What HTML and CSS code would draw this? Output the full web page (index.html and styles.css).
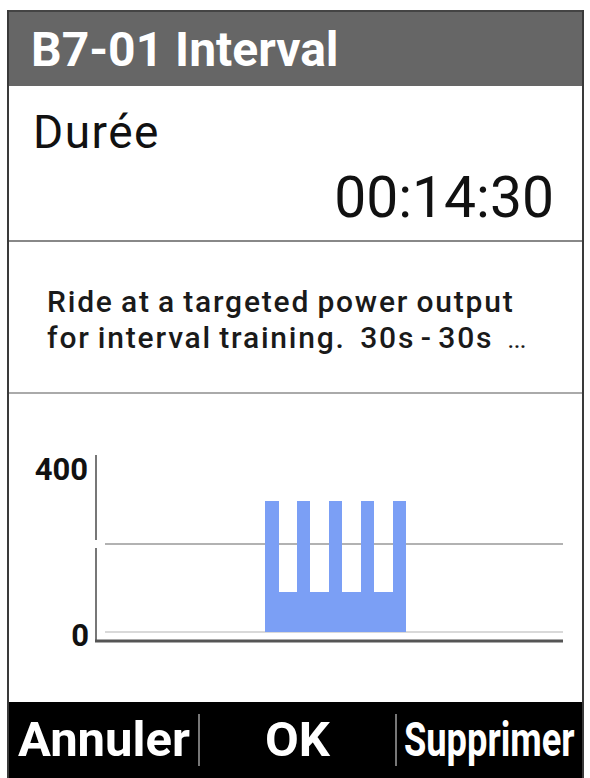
FILE: index.html
```html
<!DOCTYPE html>
<html lang="fr">
<head>
  <meta charset="UTF-8" />
  <meta name="viewport" content="width=device-width, initial-scale=1.0" />
  <title>B7-01 Interval</title>
  <link rel="stylesheet" href="styles.css">
</head>
<body>
  <div class="device">
    <header class="title-bar">
      <h1>B7-01 Interval</h1>
    </header>

    <section class="duration">
      <div class="duration-label">Durée</div>
      <div class="duration-value">00:14:30</div>
    </section>

    <section class="description">
      <p>Ride at a targeted power output<br>for interval training.&nbsp; 30s&thinsp;-&thinsp;30s&nbsp; <span class="more">...</span></p>
    </section>

    <section class="chart">
      <svg class="chart-svg" viewBox="9 394 573 308" width="573" height="308">
        <!-- axes and guides -->
        <line class="axis-y" x1="96" y1="455" x2="96" y2="540" />
        <line class="axis-y" x1="96" y1="548" x2="96" y2="642" />
        <line class="grid" x1="105" y1="544" x2="563" y2="544" />
        <line class="base" x1="105" y1="632" x2="563" y2="632" />
        <line class="axis-x" x1="95" y1="641" x2="563" y2="641" />
        <!-- workout profile -->
        <path class="blocks" d="M265 632 V501 H279 V592 H297 V501 H310 V592 H329 V501 H342 V592 H361 V501 H374 V592 H393 V501 H406 V632 Z" />
        <text class="tick" x="88" y="480">400</text>
        <text class="tick" x="89" y="646">0</text>
      </svg>
    </section>

    <footer class="actions">
      <div class="btn btn-left">Annuler</div>
      <div class="sep"></div>
      <div class="btn btn-mid">OK</div>
      <div class="sep"></div>
      <div class="btn btn-right"><span>Supprimer</span></div>
    </footer>
  </div>
</body>
</html>
```

FILE: styles.css
```css
body {
  margin: 0;
  background-color: #fff;
  font-family: Roboto, "Liberation Sans", sans-serif;
  color: #111;
}
.device {
  margin: 10px 0 0 7px;
  width: 573px;
  height: 768px;
  border-left: 2px solid #3a3a3a;
  border-right: 2px solid #3a3a3a;
  display: flex;
  flex-direction: column;
  overflow: hidden;
}
.title-bar {
  height: 74px;
  background-color: #666;
  border-top: 2px solid #444;
  display: flex;
  align-items: center;
  padding-left: 22px;
}
.title-bar h1 {
  margin: 0;
  font-size: 48px;
  font-weight: bold;
  color: #fff;
}
.duration {
  border-bottom: 2px solid #888;
  padding: 24px 28px 0 24px;
  box-sizing: border-box;
  height: 156px;
}
.duration-label {
  font-size: 46px;
  line-height: 44px;
  letter-spacing: 1.5px;
}
.duration-value {
  margin-top: 16px;
  font-size: 57px;
  line-height: 56px;
  text-align: right;
}
.description {
  height: 152px;
  box-sizing: border-box;
  border-bottom: 2px solid #aaa;
  padding: 42px 0 0 38px;
}
.description p {
  margin: 0;
  font-size: 30px;
  font-weight: 500;
  line-height: 36px;
  letter-spacing: 1.8px;
  word-spacing: -2px;
  color: #1a1a1a;
}
.description .more {
  font-size: 22px;
  letter-spacing: 0;
}
.chart {
  height: 308px;
}
.chart-svg {
  display: block;
}
.axis-y {
  stroke: #777;
  stroke-width: 2;
}
.grid {
  stroke: #999;
  stroke-width: 1.5;
}
.base {
  stroke: #ccc;
  stroke-width: 1.5;
}
.axis-x {
  stroke: #555;
  stroke-width: 3;
}
.blocks {
  fill: #7b9ff5;
}
.tick {
  font-family: Roboto, "Liberation Sans", sans-serif;
  font-size: 31px;
  font-weight: bold;
  text-anchor: end;
  fill: #111;
}
.actions {
  flex: 1;
  background-color: #000;
  display: grid;
  grid-template-columns: 189px 2px 195px 2px 185px;
  align-items: center;
}
.btn {
  color: #fff;
  font-size: 49px;
  font-weight: bold;
  line-height: 76px;
  white-space: nowrap;
}
.btn-left {
  padding-left: 9px;
}
.btn-mid {
  text-align: center;
}
.btn-right {
  display: flex;
  justify-content: center;
  min-width: 0;
}
.btn-right span {
  display: inline-block;
  transform: scaleX(0.74);
}
.sep {
  height: 52px;
  background-color: #777;
}
```
